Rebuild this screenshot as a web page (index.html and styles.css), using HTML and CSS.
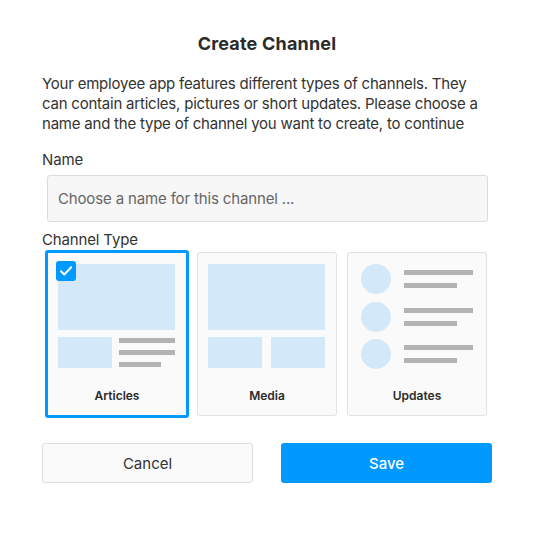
FILE: index.html
```html
<!DOCTYPE html>
<html lang="en">
<head>
  <meta charset="UTF-8">
  <meta name="viewport" content="width=device-width, initial-scale=1.0">
  <title>Create Channel</title>
  <link rel="stylesheet" href="styles.css">
</head>
<body>
  <div class="dialog">
    <h1 class="dialog-title">Create Channel</h1>
    <p class="dialog-text">Your employee app features different types of channels. They can contain articles, pictures or short updates. Please choose a name and the type of channel you want to create, to continue</p>

    <label class="field-label" for="channelName">Name</label>
    <input type="text" id="channelName" class="name-input" placeholder="Choose a name for this channel ..." />

    <div class="field-label type-label">Channel Type</div>
    <div class="type-list">
      <div class="type-card selected">
        <span class="check">
          <svg width="20" height="20" viewBox="0 0 20 20"><path d="M5 10.2l3.3 3.3L15.2 6.2" fill="none" stroke="#fff" stroke-width="2" stroke-linecap="round" stroke-linejoin="round"/></svg>
        </span>
        <div class="preview">
          <div class="block big"></div>
          <div class="row">
            <div class="block small"></div>
            <div class="lines">
              <span class="line"></span>
              <span class="line"></span>
              <span class="line short"></span>
            </div>
          </div>
        </div>
        <div class="type-name">Articles</div>
      </div>

      <div class="type-card">
        <div class="preview">
          <div class="block big"></div>
          <div class="row media-row">
            <div class="block small"></div>
            <div class="block small"></div>
          </div>
        </div>
        <div class="type-name">Media</div>
      </div>

      <div class="type-card">
        <div class="preview updates">
          <div class="update">
            <span class="avatar"></span>
            <div class="update-lines"><span class="line"></span><span class="line short"></span></div>
          </div>
          <div class="update">
            <span class="avatar"></span>
            <div class="update-lines"><span class="line"></span><span class="line short"></span></div>
          </div>
          <div class="update">
            <span class="avatar"></span>
            <div class="update-lines"><span class="line"></span><span class="line short"></span></div>
          </div>
        </div>
        <div class="type-name">Updates</div>
      </div>
    </div>

    <div class="button-group">
      <button type="button" class="cancel-button">Cancel</button>
      <button type="button" class="save-button">Save</button>
    </div>
  </div>
</body>
</html>
```

FILE: styles.css
```css
body {
  margin: 0;
  padding: 0;
  background: #ffffff;
  font-family: "Inter", "Liberation Sans", sans-serif;
  color: #333333;
}

.dialog {
  width: 450px;
  margin-left: 42px;
  padding-top: 33px;
}

.dialog-title {
  margin: 0;
  font-size: 18px;
  line-height: 22px;
  font-weight: 700;
  letter-spacing: 0.2px;
  text-align: center;
  color: #2b2b2b;
}

.dialog-text {
  margin: 19px 0 0;
  font-size: 15px;
  line-height: 20px;
  letter-spacing: -0.22px;
}

.field-label {
  display: block;
  margin-top: 16px;
  font-size: 15px;
  line-height: 20px;
  letter-spacing: -0.15px;
}

.name-input {
  display: block;
  box-sizing: border-box;
  width: 441px;
  height: 47px;
  margin: 5px 0 0 5px;
  padding: 0 10px;
  border: 1px solid #dcdcdc;
  border-radius: 3px;
  background: #f7f7f7;
  font-family: inherit;
  font-size: 15px;
  letter-spacing: -0.15px;
  color: #333333;
}

.name-input::placeholder {
  color: #666666;
}

.type-label {
  margin-top: 8px;
}

.type-list {
  display: flex;
  gap: 10px;
  margin: 2px 0 0 5px;
}

.type-card {
  position: relative;
  box-sizing: border-box;
  width: 140px;
  height: 164px;
  padding: 11px 10px 0;
  border: 1px solid #e2e2e2;
  border-radius: 3px;
  background: #fafafa;
  display: flex;
  flex-direction: column;
}

.type-card.selected {
  width: 144px;
  height: 168px;
  margin: -2px -2px 0;
  border: 3px solid #0099ff;
}

.check {
  position: absolute;
  top: 8px;
  left: 8px;
  width: 20px;
  height: 20px;
  border-radius: 3px;
  background: #0099ff;
}

.check svg {
  display: block;
}

.preview {
  display: flex;
  flex-direction: column;
  gap: 7px;
}

.block {
  background: #d3e8f8;
}

.block.big {
  width: 117px;
  height: 66px;
}

.row {
  display: flex;
  gap: 7px;
  height: 31px;
}

.media-row {
  gap: 9px;
}

.block.small {
  width: 54px;
  height: 31px;
}

.lines {
  display: flex;
  flex-direction: column;
  gap: 7px;
  padding-top: 1px;
}

.line {
  display: block;
  width: 56px;
  height: 5px;
  background: #b3b3b3;
}

.line.short {
  width: 42px;
}

.updates {
  gap: 7.5px;
  padding: 0 3px;
}

.update {
  display: flex;
  align-items: center;
  gap: 13px;
  height: 30px;
}

.avatar {
  width: 30px;
  height: 30px;
  border-radius: 50%;
  background: #d3e8f8;
}

.update-lines {
  display: flex;
  flex-direction: column;
  gap: 8px;
}

.update-lines .line {
  width: 69px;
}

.update-lines .line.short {
  width: 53px;
}

.type-name {
  margin-top: auto;
  padding-bottom: 12px;
  font-size: 12px;
  line-height: 15px;
  font-weight: 600;
  text-align: center;
  color: #2b2b2b;
}

.button-group {
  display: flex;
  justify-content: space-between;
  margin-top: 25px;
}

.button-group button {
  box-sizing: border-box;
  width: 211px;
  height: 40px;
  border-radius: 3px;
  font-family: inherit;
  font-size: 15px;
  cursor: pointer;
}

.cancel-button {
  background: #fafafa;
  border: 1px solid #dedede;
  color: #333333;
}

.save-button {
  background: #0099ff;
  border: none;
  color: #ffffff;
  font-weight: 500;
}
```
